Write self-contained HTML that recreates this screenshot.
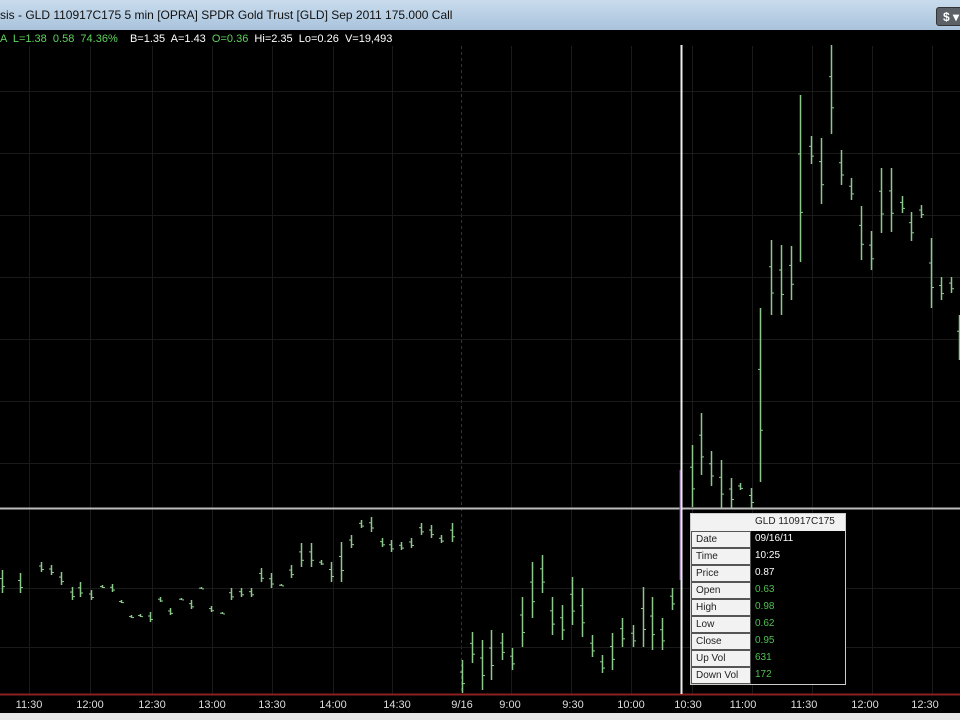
<!DOCTYPE html>
<html><head><meta charset="utf-8"><style>
html,body{margin:0;padding:0;width:960px;height:720px;overflow:hidden;background:#000;font-family:"Liberation Sans",sans-serif}
#title{position:absolute;left:0;top:0;width:960px;height:30px;background:linear-gradient(#c9dced,#a9c3dc);}
#title span{position:absolute;left:0;top:8px;font-size:12px;color:#111}
#btn{position:absolute;left:936px;top:7px;width:30px;height:19px;background:#5b6166;border:1px solid #333;border-radius:3px;color:#fff;font-size:12px;font-weight:bold;line-height:19px;padding-left:6px;box-sizing:border-box}
#info{position:absolute;left:0;top:33px;font-size:11px;color:#fff;white-space:pre;letter-spacing:0}
.g{color:#5fd35f}
#ax{position:absolute;left:0;top:696px;width:960px;height:17px}
#ax span{position:absolute;top:3px;font-size:11px;color:#ddd;transform:translateX(-50%)}
#foot{position:absolute;left:0;top:713px;width:960px;height:7px;background:#e8e8e8}
#tip{position:absolute;left:690px;top:513px;width:154px;border:1px solid #ccc;background:#000;font-size:10px}
#tip div{height:17px;display:flex}
#tip b{font-weight:normal;width:60px;background:#f2f2f2;color:#222;border:1px solid #555;box-sizing:border-box;padding:2px 0 0 4px}
#tip i{font-style:normal;flex:1;color:#fff;padding:2px 0 0 4px}
#tip i.g{color:#4fc04f}
</style></head><body>
<div id="title"><span>sis - GLD 110917C175 5 min [OPRA] SPDR Gold Trust [GLD] Sep 2011 175.000 Call</span><div id="btn">$ ▾</div></div>
<div id="info"><span class="g">A  L=1.38  0.58  74.36%</span>    B=1.35  A=1.43  <span class="g">O=0.36</span>  Hi=2.35  Lo=0.26  V=19,493</div>
<svg id="s" width="960" height="720" style="position:absolute;left:0;top:0" xmlns="http://www.w3.org/2000/svg"></svg>
<div id="ax"><span style="left:29px">11:30</span><span style="left:90px">12:00</span><span style="left:152px">12:30</span><span style="left:212px">13:00</span><span style="left:272px">13:30</span><span style="left:333px">14:00</span><span style="left:397px">14:30</span><span style="left:462px">9/16</span><span style="left:510px">9:00</span><span style="left:573px">9:30</span><span style="left:631px">10:00</span><span style="left:688px">10:30</span><span style="left:743px">11:00</span><span style="left:804px">11:30</span><span style="left:865px">12:00</span><span style="left:925px">12:30</span></div>
<div id="foot"></div>
<div id="tip">
<div><b style="background:#f2f2f2;border-color:#f2f2f2"></b><i style="background:#f2f2f2;color:#222">GLD 110917C175</i></div>
<div><b>Date</b><i>09/16/11</i></div>
<div><b>Time</b><i>10:25</i></div>
<div><b>Price</b><i>0.87</i></div>
<div><b>Open</b><i class="g">0.63</i></div>
<div><b>High</b><i class="g">0.98</i></div>
<div><b>Low</b><i class="g">0.62</i></div>
<div><b>Close</b><i class="g">0.95</i></div>
<div><b>Up Vol</b><i class="g">631</i></div>
<div><b>Down Vol</b><i class="g">172</i></div>
</div>
<script>
var s=document.getElementById('s'),h='';
function L(x1,y1,x2,y2,c,w,d){h+='<line x1="'+x1+'" y1="'+y1+'" x2="'+x2+'" y2="'+y2+'" stroke="'+c+'" stroke-width="'+(w||1)+'"'+(d?' stroke-dasharray="'+d+'"':'')+'/>';}
var vx=[29,90,152,212,272,333,392,511,571,631,692,752,812,872,932];
vx.forEach(function(x){L(x+.5,46,x+.5,694,'#1a1a1a');});
L(461.5,46,461.5,694,'#333',1,'3,3');
[91,153,215,277,339,401,463].forEach(function(y){L(0,y+.5,960,y+.5,'#1a1a1a');});
[588,647].forEach(function(y){L(0,y+.5,960,y+.5,'#1a1a1a');});
L(0,508.5,960,508.5,'#bbb',2);
L(0,694.5,960,694.5,'#8a2020',2);
L(680.5,470,680.5,580,'#8040a0',2);
L(681.5,45,681.5,694,'#eee',2);
var c='#8cc88c';
function bar(x,t,b){L(x+.5,t,x+.5,b,c,1.5);var m=t+(b-t)*0.35,n=t+(b-t)*0.7;L(x-2,m+.5,x,m+.5,c);L(x+1,n+.5,x+3,n+.5,c);}
var up=[[692,445,507],[701,413,475],[711,451,486],[721,460,508],[731,478,508],[740,483,490],[751,488,508],[760,308,482],[771,240,315],[781,245,315],[791,246,300],[800,95,262],[811,136,164],[821,138,204],[831,45,134],[841,150,185],[851,178,200],[861,206,260],[871,231,270],[881,168,233],[891,168,232],[902,196,213],[911,212,241],[921,205,218],[931,238,308],[941,277,300],[951,277,293],[959,315,360]];
up.forEach(function(a){bar(a[0],a[1],a[2]);});
var lo=[[2,570,593],[20,573,593],[41,562,572],[51,565,575],[61,572,585],[72,587,600],[80,582,597],[91,590,600],[102,585,588],[112,584,592],[121,600,603],[131,615,618],[140,614,617],[150,612,622],[160,597,602],[170,608,615],[181,598,600],[191,600,609],[201,587,589],[211,606,612],[222,612,614],[231,588,600],[241,588,597],[251,588,597],[261,568,582],[271,573,588],[281,584,586],[291,565,578],[301,543,567],[311,543,567],[321,560,565],[331,562,582],[341,542,582],[351,535,548],[361,520,528],[371,517,532],[382,538,547],[391,540,552],[401,542,550],[411,538,548],[421,523,535],[431,525,538],[441,535,543],[452,523,542],[462,660,693],[472,632,663],[482,640,690],[491,630,680],[502,633,660],[512,648,670],[522,597,647],[532,562,618],[542,555,593],[552,597,635],[562,605,640],[572,577,625],[582,588,637],[592,635,657],[602,655,673],[612,633,670],[622,618,647],[633,625,647],[643,587,647],[652,597,650],[662,618,650],[672,588,610]];
lo.forEach(function(a){bar(a[0],a[1],a[2]);});
s.innerHTML=h;
</script>
</body></html>
